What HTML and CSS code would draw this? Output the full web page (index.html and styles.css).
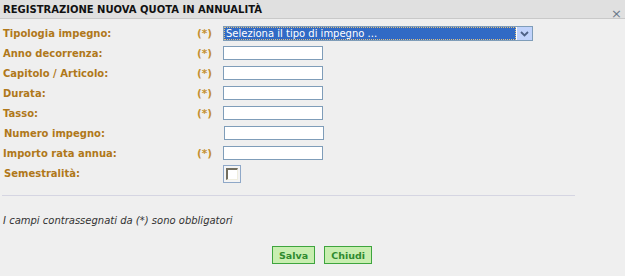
FILE: index.html
```html
<!DOCTYPE html>
<html lang="it">
<head>
<meta charset="utf-8">
<link rel="stylesheet" href="styles.css">
</head>
<body>
<div class="dialog">
  <div class="titlebar">
    <span class="title">REGISTRAZIONE NUOVA QUOTA IN ANNUALITÀ</span>
    <span class="close">×</span>
  </div>
  <div class="form">
    <div class="row">
      <label class="lbl">Tipologia impegno:</label><span class="req">(*)</span>
      <div class="select"><span class="sel-text">Seleziona il tipo di impegno ...</span><span class="sel-btn"><svg width="9" height="6" viewBox="0 0 9 6"><path d="M1 1 L4.5 4.5 L8 1" fill="none" stroke="#4d6185" stroke-width="1.8"/></svg></span></div>
    </div>
    <div class="row"><label class="lbl">Anno decorrenza:</label><span class="req">(*)</span><input class="txt" type="text"></div>
    <div class="row"><label class="lbl">Capitolo / Articolo:</label><span class="req">(*)</span><input class="txt" type="text"></div>
    <div class="row"><label class="lbl">Durata:</label><span class="req">(*)</span><input class="txt" type="text"></div>
    <div class="row"><label class="lbl">Tasso:</label><span class="req">(*)</span><input class="txt" type="text"></div>
    <div class="row shift"><label class="lbl">Numero impegno:</label><span class="req"></span><input class="txt" type="text"></div>
    <div class="row"><label class="lbl">Importo rata annua:</label><span class="req">(*)</span><input class="txt" type="text"></div>
    <div class="row shift check-row"><label class="lbl">Semestralità:</label><span class="req"></span><span class="chkwrap"><span class="chk"></span></span></div>
  </div>
  <hr class="sep">
  <p class="note">I campi contrassegnati da (*) sono obbligatori</p>
  <div class="buttons">
    <button class="btn">Salva</button>
    <button class="btn">Chiudi</button>
  </div>
</div>
</body>
</html>
```
FILE: styles.css
```css
html, body {
  margin: 0;
  padding: 0;
  background: #efefef;
}
body {
  font-family: "DejaVu Sans", Verdana, sans-serif;
  width: 625px;
  height: 276px;
  overflow: hidden;
}
.titlebar {
  height: 18px;
  background: #e0e0e0;
  border-bottom: 1px solid #c9c9c9;
  display: flex;
  align-items: center;
  justify-content: space-between;
  padding: 0 3px 0 3px;
}
.title {
  font-size: 10px;
  font-weight: bold;
  color: #111;
  padding-top: 1px;
}
.close {
  font-size: 13px;
  color: #6b7a8a;
  padding-top: 8px;
}
.form {
  padding-top: 4px;
}
.row {
  display: flex;
  align-items: center;
  height: 20px;
}
.lbl {
  width: 194px;
  padding-left: 3px;
  font-size: 10px;
  font-weight: bold;
  color: #b0781a;
}
.shift .lbl {
  padding-left: 4px;
  width: 193px;
}
.req {
  width: 26px;
  font-size: 10.5px;
  font-weight: bold;
  color: #c49030;
}
.select {
  width: 310px;
  height: 15px;
  border: 1px solid #7f9db9;
  background: #fff;
  display: flex;
  box-sizing: border-box;
  margin-top: 1px;
}
.sel-text {
  flex: 1;
  background: #316ac5;
  color: #fff;
  font-size: 10px;
  line-height: 13px;
  padding-left: 2px;
  margin: 0 1px 0 0;
  outline: 1px dotted #e0c080;
  outline-offset: -1px;
}
.sel-btn {
  width: 15px;
  background: #c1d3fb;
  display: flex;
  align-items: center;
  justify-content: center;
}
.txt {
  width: 100px;
  height: 14px;
  box-sizing: border-box;
  border: 1px solid #7f9db9;
  background: #fff;
  padding: 0;
  margin: 0;
}
.shift .txt {
  margin-left: 1px;
}
.check-row {
  height: 21px;
}
.chkwrap {
  width: 18px;
  height: 18px;
  box-sizing: border-box;
  border: 1px solid #8fa8c8;
  background: #f4f4f4;
  display: flex;
  align-items: center;
  justify-content: center;
}
.chk {
  width: 12px;
  height: 12px;
  box-sizing: border-box;
  background: #fff;
  border-top: 2px solid #726e5e;
  border-left: 2px solid #726e5e;
  border-right: 1px solid #f0eee0;
  border-bottom: 1px solid #f0eee0;
}
.sep {
  margin: 11px 0 0 2px;
  width: 573px;
  border: 0;
  border-top: 1px solid #d5d5e2;
  height: 0;
}
.note {
  margin: 19px 0 0 3px;
  font-size: 10px;
  font-style: italic;
  color: #333;
}
.buttons {
  display: flex;
  justify-content: center;
  gap: 9px;
  margin-top: 20px;
  padding-left: 19px;
}
.btn {
  font-family: "DejaVu Sans", Verdana, sans-serif;
  font-size: 9.5px;
  font-weight: bold;
  color: #2f8a2f;
  background: #c8eeb0;
  border: 1px solid #3ea53e;
  height: 18px;
  padding: 0 6px;
  margin: 0;
}
```
